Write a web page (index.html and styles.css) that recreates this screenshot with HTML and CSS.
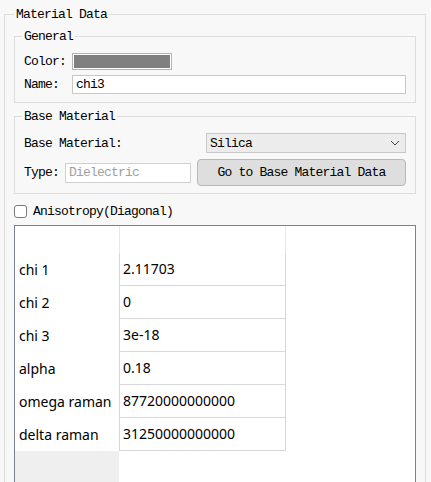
FILE: index.html
```html
<!DOCTYPE html>
<html lang="en">
<head>
    <meta charset="UTF-8">
    <title>Material Data</title>
    <link rel="stylesheet" href="styles.css">
</head>
<body>

    <fieldset class="panel">
        <legend>Material Data</legend>

        <fieldset class="sub general">
            <legend>General</legend>
            <div class="form-row first">
                <span class="label">Color:</span>
                <span class="swatch"><span class="swatch-fill"></span></span>
            </div>
            <div class="form-row">
                <span class="label">Name:</span>
                <input class="text-input name-input" type="text" value="chi3">
            </div>
        </fieldset>

        <fieldset class="sub base">
            <legend>Base Material</legend>
            <div class="form-row first">
                <span class="label">Base Material:</span>
                <div class="combo">
                    <span>Silica</span>
                    <svg width="10" height="6" viewBox="0 0 10 6"><path d="M1 1 L5 5 L9 1" fill="none" stroke="#444" stroke-width="1"/></svg>
                </div>
            </div>
            <div class="form-row type-row">
                <span class="label short">Type:</span>
                <input class="text-input type-input" type="text" value="Dielectric" disabled>
                <button class="btn">Go to Base Material Data</button>
            </div>
        </fieldset>

        <label class="check-row">
            <span class="checkbox"></span>
            <span>Anisotropy(Diagonal)</span>
        </label>

        <div class="grid">
            <div class="grid-row header">
                <div class="row-head"></div>
                <div class="cell"></div>
            </div>
            <div class="grid-row">
                <div class="row-head">chi 1</div>
                <div class="cell">2.11703</div>
            </div>
            <div class="grid-row">
                <div class="row-head">chi 2</div>
                <div class="cell">0</div>
            </div>
            <div class="grid-row">
                <div class="row-head">chi 3</div>
                <div class="cell">3e-18</div>
            </div>
            <div class="grid-row">
                <div class="row-head">alpha</div>
                <div class="cell">0.18</div>
            </div>
            <div class="grid-row">
                <div class="row-head">omega raman</div>
                <div class="cell">87720000000000</div>
            </div>
            <div class="grid-row">
                <div class="row-head">delta raman</div>
                <div class="cell">31250000000000</div>
            </div>
            <div class="grid-fill"></div>
        </div>
    </fieldset>

</body>
</html>
```

FILE: styles.css
```css
:root {
    --bg: #f8f8f8;
    --group-border: #dcdcdc;
    --input-border: #c8c8c8;
    --grid-line: #d8d8d8;
    --grid-border: #7d818c;
    --mono: "Liberation Mono", "DejaVu Sans Mono", monospace;
}

html, body {
    height: 100%;
}

body {
    margin: 0;
    background-color: var(--bg);
    font-family: var(--mono);
    font-size: 13px;
    letter-spacing: -0.8px;
    color: #000;
    overflow: hidden;
}

/* group boxes */
fieldset {
    border: 1px solid var(--group-border);
    min-width: 0;
}

legend {
    padding: 0 2px;
    line-height: 17px;
    height: 17px;
}

.panel {
    margin: 6px 5px 0 4px;
    padding: 5px 9px 0 9px;
    height: 520px;
    box-sizing: border-box;
}

.sub {
    margin: 0;
    padding: 0 9px;
}

.sub legend {
    margin-left: -2px;
}

.general {
    padding-bottom: 8px;
}

.base {
    margin-top: 5px;
    padding-bottom: 7px;
}

/* form rows */
.form-row {
    display: flex;
    align-items: center;
    margin-top: 5px;
}

.form-row.first {
    margin-top: 8px;
}

.label {
    width: 48px;
    flex: none;
    line-height: 17px;
}

.base .label {
    width: auto;
}

.label.short {
    margin-right: 6px;
}

.swatch {
    width: 100px;
    height: 17px;
    box-sizing: border-box;
    border: 1px solid #b4b4b4;
    padding: 1px;
    background: #fff;
}

.swatch-fill {
    display: block;
    height: 100%;
    background: #808080;
}

.text-input {
    font-family: var(--mono);
    font-size: 13px;
    letter-spacing: -0.8px;
    color: #000;
    height: 19px;
    box-sizing: border-box;
    border: 1px solid var(--input-border);
    background: #fff;
    padding: 0 3px;
    margin: 0;
    outline: none;
}

.name-input {
    flex: 1;
    min-width: 0;
}

.combo {
    margin-left: auto;
    width: 200px;
    height: 20px;
    box-sizing: border-box;
    border: 1px solid var(--input-border);
    background: #ececec;
    display: flex;
    align-items: center;
    justify-content: space-between;
    padding: 0 5px 0 3px;
}

.type-row {
    margin-top: 6px;
}

.type-input {
    width: 126px;
    height: 20px;
    color: #a0a0a0;
    background: #fff;
    border-color: #d0d0d0;
}

.btn {
    flex: 1;
    margin-left: 6px;
    height: 27px;
    font-family: var(--mono);
    font-size: 13px;
    letter-spacing: -0.8px;
    color: #000;
    background: #dedede;
    border: 1px solid #b8b8b8;
    border-radius: 4px;
    padding: 0;
}

/* checkbox */
.check-row {
    display: flex;
    align-items: center;
    gap: 6px;
    margin-top: 9px;
    height: 16px;
}

.checkbox {
    width: 13px;
    height: 13px;
    box-sizing: border-box;
    border: 1px solid #7a7a7a;
    border-radius: 3px;
    background: #fff;
}

/* property grid */
.grid {
    margin-top: 6px;
    height: 300px;
    border: 1px solid var(--grid-border);
    background: #fff;
    font-family: "Noto Sans", sans-serif;
    font-size: 14px;
    letter-spacing: 0;
    display: flex;
    flex-direction: column;
}

.grid-row {
    display: flex;
    height: 33px;
}

.grid-row.header {
    height: 27px;
}

.row-head {
    width: 105px;
    flex: none;
    box-sizing: border-box;
    border-right: 1px solid var(--grid-line);
    padding-left: 4px;
    display: flex;
    align-items: center;
}

.cell {
    width: 166px;
    box-sizing: border-box;
    border-right: 1px solid var(--grid-line);
    border-bottom: 1px solid var(--grid-line);
    padding-left: 3px;
    padding-bottom: 1px;
    display: flex;
    align-items: center;
}

.header .row-head,
.header .cell {
    border-right-color: #e8e8e8;
}

.header .cell {
    border-bottom: none;
}

.grid-row:not(.header) .row-head {
    padding-bottom: 1px;
}

.grid-fill {
    width: 104px;
    flex: 1;
    background: #efefef;
}
```
